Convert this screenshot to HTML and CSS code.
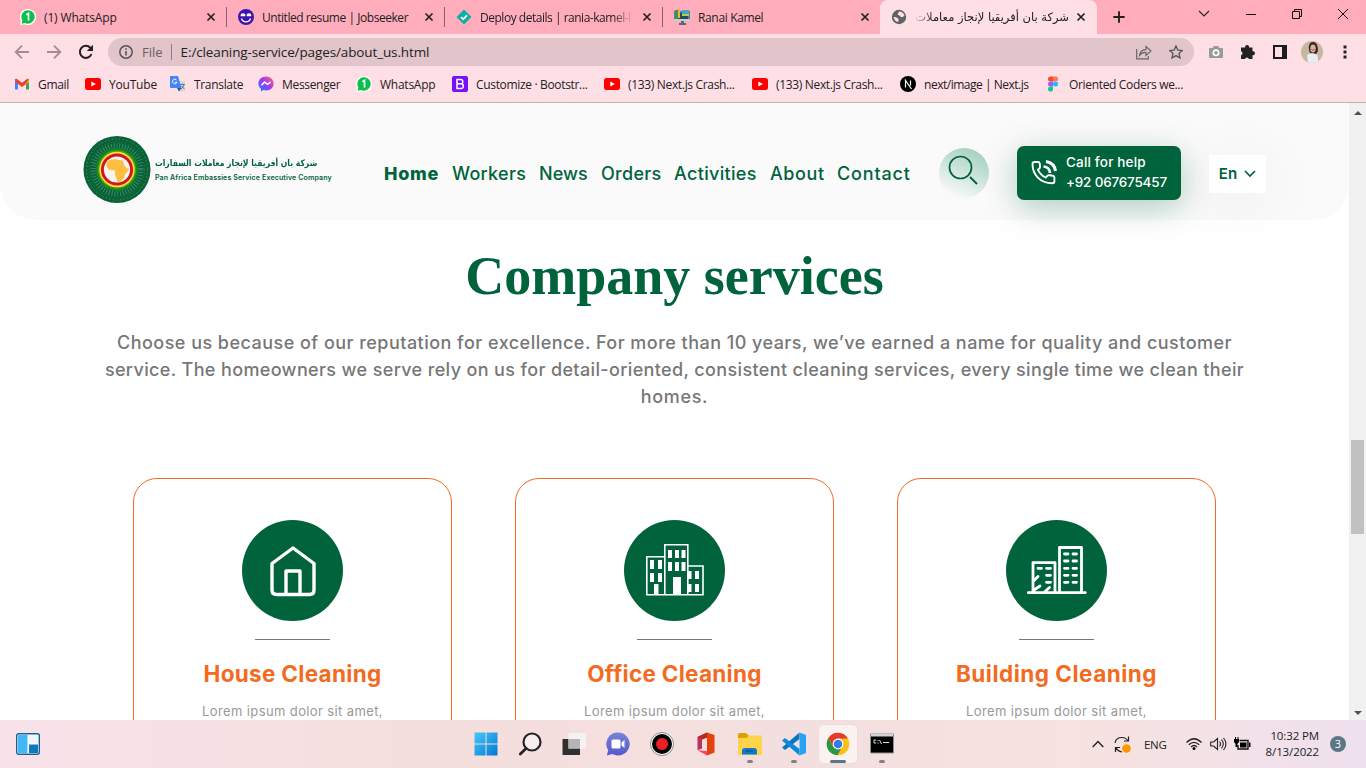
FILE: index.html
```html
<!DOCTYPE html>
<html lang="en">
<head>
<meta charset="utf-8">
<title>Company services</title>
<link rel="stylesheet" href="styles.css">
</head>
<body>
<svg class="defs" width="0" height="0">
  <symbol id="x" viewBox="0 0 10 10"><path d="M1.5 1.5l7 7M8.5 1.5l-7 7" stroke="#222" stroke-width="1.7"/></symbol>
  <symbol id="wa" viewBox="0 0 16 16"><path d="M8 0a8 8 0 1 1-3.5 15.2L0 16l1-4A8 8 0 0 1 8 0z" fill="#fff"/><path d="M8.2 1.2a6.7 6.7 0 1 1-3.2 12.7L1.6 14.8l.8-3.4A6.7 6.7 0 0 1 8.200 1.200z" fill="#0abf4a"/><path d="M6.300 5.800l2.200-1.300v7" fill="none" stroke="#fff" stroke-width="1.700"/></symbol>
  <symbol id="yt" viewBox="0 0 16 12"><rect width="16" height="12" rx="2.500" fill="#f00"/><path d="M6.300 3.400v5.200L10.800 6z" fill="#fff"/></symbol>
</svg>
<div class="window">
  <div class="tabs">
    <div class="tab"><svg class="fav" viewBox="0 0 16 16"><use href="#wa"/></svg><span class="t t1">(1) WhatsApp</span><svg class="close"><use href="#x"/></svg></div>
    <div class="tab"><svg class="fav" viewBox="0 0 16 16"><circle cx="8" cy="8" r="8" fill="#3d14b4"/><path d="M3.300 6.500q0-1.700 1.700-1.700t1.700 1.700zM9.300 6.500q0-1.700 1.700-1.700t1.700 1.700zM3.500 9.500q1 3.300 4.500 3.300t4.500-3.300" fill="none" stroke="#fff" stroke-width="1.300"/></svg><span class="t t2">Untitled resume | Jobseeker</span><svg class="close"><use href="#x"/></svg></div>
    <div class="tab"><svg class="fav" viewBox="0 0 16 16"><path d="M8 .5L15.500 8 8 15.500.5 8z" fill="#0fada2"/><path d="M5 8l2.200 2.200L11 6.300" fill="none" stroke="#fff" stroke-width="1.700"/></svg><span class="t t3 fade">Deploy details | rania-kamel-l</span><svg class="close"><use href="#x"/></svg></div>
    <div class="tab"><svg class="fav" viewBox="0 0 16 16"><path d="M0 2h16v10H0z" fill="#607d8b"/><path d="M2 4h12v6H2z" fill="#254b60"/><path d="M1 1h3v9H1z" fill="#3f8f55"/><path d="M4 0h2v9H4z" fill="#e9b43b"/><path d="M8 1h7v4H8z" fill="#46a6c9"/><path d="M8 5h7v2H8z" fill="#b5cf42"/><path d="M0 10h16v2H0z" fill="#c6d0d4"/><path d="M7 12h3v2h2v2H5v-2h2z" fill="#596a70"/></svg><span class="t t4">Ranai Kamel</span><svg class="close"><use href="#x"/></svg></div>
    <div class="tab active"><svg class="fav" viewBox="0 0 16 16"><circle cx="8" cy="8" r="7.200" fill="#5f6368"/><path d="M2.500 8q3-.5 4.500 1.500T6.500 13Q3.500 12 2.500 8zM8 2.500q4 0 5.500 4Q11 9.500 9.500 7.500T7 6 8 2.500z" fill="#ffdfe6"/></svg><span class="t ar fade-left" dir="rtl">شركة بان أفريقيا لإنجاز معاملات</span><svg class="close"><use href="#x"/></svg></div>
    <svg class="plus" viewBox="0 0 12 12"><path d="M6 .3v11.400M.3 6h11.400" stroke="#222" stroke-width="1.900"/></svg>
    <div class="winctl">
      <svg width="12" height="8" viewBox="0 0 12 8"><path d="M1 1l5 5 5-5" fill="none" stroke="#222" stroke-width="1.100"/></svg>
      <svg width="10" height="10" viewBox="0 0 10 10"><path d="M0 5.500h10" stroke="#111"/></svg>
      <svg width="10" height="10" viewBox="0 0 10 10"><path d="M.5 2.500h7v7h-7zM2.500 2.500v-2h7v7h-2" fill="none" stroke="#111"/></svg>
      <svg width="10" height="10" viewBox="0 0 10 10"><path d="M0 0l10 10M10 0L0 10" stroke="#111"/></svg>
    </div>
  </div>
  <div class="toolbar">
    <svg class="nav-i" viewBox="0 0 16 16"><path d="M15 8H2M8 1.700L1.700 8 8 14.300" fill="none" stroke="#a38d93" stroke-width="1.800"/></svg>
    <svg class="nav-i" viewBox="0 0 16 16"><path d="M1 8h13M8 1.700L14.300 8 8 14.300" fill="none" stroke="#a38d93" stroke-width="1.800"/></svg>
    <svg class="nav-i" viewBox="0 0 16 16"><path d="M13.500 10A6 6 0 1 1 12.300 3.800L14 5.500" fill="none" stroke="#222" stroke-width="2"/><path d="M15 .8v6.200H8.800z" fill="#222"/></svg>
    <div class="omni">
      <svg width="14" height="14" viewBox="0 0 14 14"><circle cx="7" cy="7" r="6.200" fill="none" stroke="#5a5256" stroke-width="1.500"/><path d="M7 6v4.500M7 3.300v1.500" stroke="#5a5256" stroke-width="1.600"/></svg>
      <span class="file">File</span><span class="url">E:/cleaning-service/pages/about_us.html</span>
      <svg class="share" width="16" height="15" viewBox="0 0 16 15"><path d="M.7 4v9.800h11.600V11M3.500 10.500q.5-5.500 6.500-5.800V1.500l5 4.500-5 4.500V7.500q-4-.3-6.500 3z" fill="none" stroke="#666" stroke-width="1.200"/></svg>
      <svg width="14" height="14" viewBox="0 0 14 14"><path d="M7 .9l1.900 4.200 4.400.4L10 8.500l1 4.500-4-2.400L3 13l1-4.500L.7 5.500l4.400-.4z" fill="none" stroke="#555" stroke-width="1.300"/></svg>
    </div>
    <div class="ext">
      <svg width="14" height="14" viewBox="0 0 14 14"><path d="M1 3h2.500L5 1h4l1.500 2H13q1 0 1 1v8q0 1-1 1H1q-1 0-1-1V4q0-1 1-1z" fill="#999"/><circle cx="7" cy="7.800" r="2.700" fill="#999" stroke="#fff" stroke-width="1.700"/></svg>
      <svg class="puzzle" width="16" height="16" viewBox="0 0 16 16"><path d="M1 3.500h4.200a2 2 0 1 1 3.800 0h3.500v3.800a2 2 0 1 1 0 3.900V15H8.900a2 2 0 0 0-3.900 0H1v-3.800a2 2 0 0 0 0-3.900z" fill="#222"/></svg>
      <svg class="panel" width="14" height="14" viewBox="0 0 14 14"><path d="M1 1h12v12H1z" fill="none" stroke="#1d1d1f" stroke-width="2"/><path d="M9 0h5v14H9z" fill="#1d1d1f"/></svg>
      <svg class="avatar" width="22" height="22" viewBox="0 0 22 22"><clipPath id="av"><circle cx="11" cy="11" r="11"/></clipPath><g clip-path="url(#av)"><path d="M0 0h22v22H0z" fill="#c5b8a0"/><path d="M8 9q-1-8 4-8t5 9l-2 3-6-1z" fill="#33262a"/><ellipse cx="12" cy="7.500" rx="2.700" ry="3.900" fill="#e2b09c"/><path d="M10.500 8.500q1.500 1.500 3 0" stroke="#b44a50" fill="none"/><path d="M6 14q5-3.500 10.500 0l1 8H7z" fill="#e9eef5"/></g></svg>
      <svg class="dots" width="4" height="14" viewBox="0 0 4 14"><path d="M.5.500h3v3h-3zM.5 5.500h3v3h-3zM.5 10.500h3v3h-3z" fill="#222"/></svg>
    </div>
  </div>
  <div class="marks">
    <span class="m m1"><svg viewBox="0 0 16 16"><path d="M1 3.500v10h3v-7z" fill="#4285f4"/><path d="M15 3.500v10h-3v-7z" fill="#34a853"/><path d="M12 5l3-2v3l-3 2.500z" fill="#fbbc04"/><path d="M1 3q1.500-1 3 .8l4 3 4-3q1.500-1.800 3-.8L12 8l-4 3-4-3-3-3z" fill="#ea4335"/></svg>Gmail</span>
    <span class="m m2"><svg viewBox="0 0 16 12"><use href="#yt"/></svg>YouTube</span>
    <span class="m m3"><svg viewBox="0 0 16 16"><path d="M6 5h9v10.500H9z" fill="#d5d9dc"/><path d="M0 0h8l3.500 12H1q-1 0-1-1z" fill="#4285f4"/><path d="M7 12h4.500L9 15.500z" fill="#2457b5"/><path d="M6.800 4.300A2.300 2.300 0 1 0 7 6.300H5" stroke="#fff" fill="none"/><path d="M10 8.500h5M12.500 7.500v1M14 8.500q-1 3.500-3 4.500M11.500 10l3 3" stroke="#607d8b" fill="none"/></svg>Translate</span>
    <span class="m m4"><svg viewBox="0 0 16 16"><defs><linearGradient id="ms" x1="0" y1="1" x2="1" y2="0"><stop stop-color="#078cff"/><stop offset=".5" stop-color="#a334fa"/><stop offset="1" stop-color="#ff6a68"/></linearGradient></defs><path d="M8 .5c4.500 0 7.600 3 7.600 7s-3 7-7.600 7c-1 0-1.700-.2-2.500-.4L3 15.400v-2.500C1.300 11.700.4 9.700.4 7.500c0-4 3.100-7 7.600-7z" fill="url(#ms)"/><path d="M3.500 9.300L6.500 6l3 2.300L12.500 6" fill="none" stroke="#fff" stroke-width="1.600"/></svg>Messenger</span>
    <span class="m m5"><svg viewBox="0 0 16 16"><use href="#wa"/></svg>WhatsApp</span>
    <span class="m m6"><svg viewBox="0 0 16 16"><rect width="16" height="16" rx="2" fill="#7610f7"/><path d="M5 3.500h3.500q2.300 0 2.300 2.200T8.500 7.800H5h3.800q2.500 0 2.500 2.400T8.800 12.600H5z" fill="none" stroke="#fff" stroke-width="1.500"/></svg>Customize · Bootstr...</span>
    <span class="m m7"><svg viewBox="0 0 16 12"><use href="#yt"/></svg>(133) Next.js Crash...</span>
    <span class="m m8"><svg viewBox="0 0 16 12"><use href="#yt"/></svg>(133) Next.js Crash...</span>
    <span class="m m9"><svg viewBox="0 0 16 16"><circle cx="8" cy="8" r="8"/><path d="M5.500 11.500v-7l6 8.500M10.500 4.500v5" fill="none" stroke="#fff" stroke-width="1.200"/></svg>next/image | Next.js</span>
    <span class="m m10"><svg viewBox="0 0 16 16"><path d="M8 .5H5.500a2.500 2.500 0 0 0 0 5H8z" fill="#f24e1e"/><path d="M8 .5h2.500a2.500 2.500 0 0 1 0 5H8z" fill="#ff7262"/><path d="M8 5.500H5.500a2.500 2.500 0 0 0 0 5H8z" fill="#a259ff"/><circle cx="10.500" cy="8" r="2.500" fill="#1abcfe"/><path d="M8 10.500H5.500A2.500 2.500 0 1 0 8 13z" fill="#0acf83"/></svg>Oriented Coders we...</span>
  </div>
  <div class="view">
    <div class="page">
      <header class="header">
        <svg class="seal" viewBox="0 0 68 68"><circle cx="34" cy="34" r="34" fill="#05633c"/><circle cx="34" cy="34" r="31" fill="none" stroke="#8f8526" stroke-width="1" stroke-dasharray="1.200 2.500"/><circle cx="34" cy="34" r="28" fill="none" stroke="#5f772c" stroke-width="1" stroke-dasharray="1 2.500"/><circle cx="34" cy="34" r="24" fill="none" stroke="#4a8f6c" stroke-width="5.500" stroke-dasharray=".8 2"/><circle cx="34" cy="34" r="21.500" fill="#17851d"/><circle cx="34" cy="34" r="19.500" fill="#4f9e1b"/><circle cx="34" cy="34" r="18" fill="#f4e13a"/><circle cx="34" cy="34" r="16.300" fill="#d41622"/><circle cx="34" cy="34" r="13.300" fill="#f7f4ee"/><path d="M23.500 27q1.500-3 5-3 5-1 8 .5h3l2.500 6 2 2.500h2.500q-.5 3-4.500 6l-.5 3-2 2-2 3q-3 .5-3.500-2l-2-6q.5-3-1-4.500-5 1-7-2.500-1-3-.5-5z" fill="#fdbf3f"/></svg>
        <div class="brand"><span class="brand-ar" dir="rtl">شركة بان أفريقيا لإنجاز معاملات السفارات</span><span class="brand-en">Pan Africa Embassies Service Executive Company</span></div>
        <nav class="menu"><a class="w1">Home</a><a class="w2">Workers</a><a class="w3">News</a><a class="w4">Orders</a><a class="w5">Activities</a><a class="w6">About</a><a class="w7">Contact</a></nav>
        <div class="search"><svg width="50" height="50" viewBox="0 0 50 50"><circle cx="21.500" cy="19.500" r="11" fill="none" stroke="#00633c" stroke-width="1.700"/><path d="M31 29l7 7" stroke="#00633c" stroke-width="1.900"/></svg></div>
        <div class="call"><svg width="26" height="26" viewBox="0 0 26 26"><path d="M3.500 2h3.600q1.400 0 1.600 1.500l.4 3q.1 1.200-.8 2L7 9.800q2.500 5.200 7.700 7.700l1.600-1.700q.8-.8 2-.6l3.600.6q1.500.3 1.500 1.800v3.600q0 2-2 2Q12 23 6.800 17.600 1.500 12 1.500 4.300 1.500 2 3.500 2z" fill="none" stroke="#fff" stroke-width="1.900"/><path d="M12.500 6.500q6 .5 6.500 6.500" fill="none" stroke="#fff" stroke-width="2.600"/><path d="M15 1.500q8.500 1.500 9.500 9.500" fill="none" stroke="#fff" stroke-width="3"/></svg><div><span class="c1">Call for help</span><span class="c2">+92 067675457</span></div></div>
        <div class="lang"><span>En</span><svg width="12" height="8" viewBox="0 0 12 8"><path d="M1 1l5 5 5-5" fill="none" stroke="#00633c" stroke-width="1.700"/></svg></div>
      </header>
      <h1 class="title">Company services</h1>
      <p class="intro"><span class="l1">Choose us because of our reputation for excellence. For more than 10 years, we’ve earned a name for quality and customer</span><span class="l2">service. The homeowners we serve rely on us for detail-oriented, consistent cleaning services, every single time we clean their</span><span class="l3">homes.</span></p>
      <div class="cards">
        <section class="card"><div class="disc"><svg viewBox="0 0 101 101" fill="none" stroke="#fff" stroke-width="3.400" stroke-linejoin="round"><path d="M51 28L30 43.500V70q0 4.500 4.500 4.500h33q4.500 0 4.500-4.500V43.500z"/><path d="M44 74V51h14v23"/></svg></div><hr><h2 class="h-a">House Cleaning</h2><p>Lorem ipsum dolor sit amet,</p></section>
        <section class="card"><div class="disc"><svg viewBox="0 0 101 101"><path d="M22.800 36.800h18v38h-18zM40.800 24.800h23v50h-23zM63.800 46h15.200v28.800H63.800z" fill="none" stroke="#fff" stroke-width="1.600"/><path d="M26 40h4v9h-4zM34 40h4v9h-4zM26 53h4v9h-4zM34 53h4v9h-4zM30 64h4.500v11H30zM44 30h4v8h-4zM51 30h4v8h-4zM57.500 30h4v8h-4zM44 42h4v9h-4zM51 42h4v9h-4zM57.500 42h4v9h-4zM49 57h8v18h-8zM64 51h3.500v8H64zM71 51h4v8h-4zM64 64h3.500v8H64zM71 64h4v8h-4z" fill="#fff"/></svg></div><hr><h2 class="h-b">Office Cleaning</h2><p>Lorem ipsum dolor sit amet,</p></section>
        <section class="card"><div class="disc"><svg viewBox="0 0 101 101" fill="none" stroke="#fff" stroke-width="2.800" stroke-linecap="round" stroke-linejoin="round"><path d="M22.300 72.700h57M27 72V42.700h22V72M53.500 72V27.500h22V72M32 48.300h3.500M40.500 48.300h4M40.500 55.300h4M40.500 62.300h4M58.500 34h3.500M67 34h3.500M58.500 41h3.500M67 41h3.500M58.500 48.300h3.500M67 48.300h3.500M58.500 55.300h3.500M67 55.300h3.500M58.500 62.300h3.500M67 62.300h3.500M27.500 61l4.500-4.500M28 70l6-4M38.500 72l5-4.500"/></svg></div><hr><h2 class="h-c">Building Cleaning</h2><p>Lorem ipsum dolor sit amet,</p></section>
      </div>
    </div>
    <div class="scroll"><i class="up"></i><b></b><i class="down"></i></div>
  </div>
  <footer class="task">
    <svg class="widgets" width="24" height="22" viewBox="0 0 24 22"><rect x=".7" y=".7" width="22.600" height="20.600" rx="2" fill="#fff" stroke="#156098" stroke-width="1.400"/><path d="M2 2h9.500v18H2z" fill="#43b8f4"/><path d="M13 2h9v8h-9z" fill="#eef8fc"/><path d="M13 11.500h9V20h-9z" fill="#1378b9"/></svg>
    <div class="apps">
      <span><svg viewBox="0 0 24 24"><defs><linearGradient id="wi" x1="0" y1="0" x2="1" y2="1"><stop stop-color="#49c8fb"/><stop offset="1" stop-color="#0078d4"/></linearGradient></defs><path d="M.5.5h11v11H.500zM12.500.5h11v11h-11zM.5 12.500h11v11H.500zM12.500 12.500h11v11h-11z" fill="url(#wi)"/></svg></span>
      <span><svg viewBox="0 0 24 24"><circle cx="14" cy="10" r="8.500" fill="#f8eeee" stroke="#252525" stroke-width="2.200"/><path d="M8 16.500L2.300 22" stroke="#252525" stroke-width="2.800" stroke-linecap="round"/></svg></span>
      <span><svg viewBox="0 0 24 24"><path d="M.5 7H18v16H.500z" fill="#303030"/><path d="M6.500 1H24v15.500H6.500z" fill="#f4f4f4" opacity=".9"/><path d="M6.500 7H18v9.500H6.500z" fill="#b5b5b5"/></svg></span>
      <span><svg viewBox="0 0 24 24"><defs><linearGradient id="ch" x1="0" y1="0" x2="0" y2="1"><stop stop-color="#7b83d7"/><stop offset="1" stop-color="#5558cb"/></linearGradient></defs><path d="M12 .5A11.500 11.500 0 1 1 6.500 22L.800 23.500l1.400-5.200A11.500 11.500 0 0 1 12 .5z" fill="url(#ch)"/><rect x="5.500" y="7.500" width="9" height="9" rx="1.500" fill="#fff"/><path d="M15.500 10.500l3-2.500v8l-3-2.500z" fill="#fff"/></svg></span>
      <span><svg viewBox="0 0 24 24"><circle cx="12" cy="12" r="11.500" fill="#fff" stroke="#888"/><circle cx="12" cy="12" r="10" fill="#000"/><circle cx="12" cy="12" r="6" fill="#e92127"/></svg></span>
      <span><svg viewBox="0 0 24 24"><path d="M3.500 5L13 .5v5L8 7.500v9l-4.500 1.800z" fill="#b93165"/><path d="M13 .5l7.500 2.500v17.500L13 23.500z" fill="#e34308"/><path d="M3.500 5L13 .5v5L8 7.500z" fill="#b42b17"/><path d="M3.500 18.300l9.500.7v4.500z" fill="#ed4770"/></svg></span>
      <span><svg viewBox="0 0 24 24"><path d="M0 3.500h24V23H0z" fill="#ffd34a"/><path d="M0 5.500V3q0-2 2-2h6l2.500 2.500L8.500 6H0z" fill="#dca000"/><path d="M4 22.500V19q0-3 3-3h9q3 0 3 3v3.500z" fill="#1178cc"/><path d="M8 19h7" stroke="#0b548f" stroke-width="1.500"/></svg><em></em></span>
      <span><svg viewBox="0 0 24 24"><path d="M17.500.5v6.500L3 18 0 15.500z" fill="#0876be"/><path d="M17.500 23.500V17L3 6 0 8.500z" fill="#0b8bdc"/><path d="M17.500.5L24 3v18l-6.500 2.500z" fill="#27a3f3"/></svg><em></em></span>
      <span class="on"><svg viewBox="0 0 24 24"><circle cx="12" cy="12" r="11.300" fill="#fbc116"/><path d="M2.200 6.300A11.300 11.300 0 0 1 21.800 6.500H12L7 14.500z" fill="#e33b2e"/><path d="M2.200 6.300L7 14.500 15 17l-3.500 6.300A11.300 11.300 0 0 1 2.200 6.300z" fill="#279847"/><circle cx="12" cy="12" r="5.400" fill="#fff"/><circle cx="12" cy="12" r="4.300" fill="#337bea"/></svg><em class="wide"></em></span>
      <span><svg viewBox="0 0 24 24"><path d="M.5 2h23v19H.500z" fill="#000" stroke="#8e9295"/><path d="M1 2h22v2.500H1z" fill="#d2d5d7"/><path d="M6 8H4v3h2M8 8v1M8 10.500v1M9.500 8l2 4M13 10.500h6" fill="none" stroke="#ddd"/></svg><em></em></span>
    </div>
    <div class="tray">
      <svg width="12" height="8" viewBox="0 0 12 8"><path d="M.7 7L6 1.500 11.300 7" fill="none" stroke="#222" stroke-width="1.400"/></svg>
      <svg class="sync" width="17" height="17" viewBox="0 0 17 17"><path d="M1 7q1-5.500 7-5.500 4 0 6 3.500M14.500.5V5H10M1.500 16v-4.500H6M2 12q2 3.500 6 4" fill="none" stroke="#222" stroke-width="1.200"/><circle cx="12.500" cy="12.500" r="4.300" fill="#ff9800"/></svg>
      <span class="eng">ENG</span>
      <svg class="wifi" width="16" height="12" viewBox="0 0 16 12"><path d="M.5 4.500q7.500-7.500 15 0M2.800 6.800q5.200-5 10.400 0M5 9q3-3 6 0" fill="none" stroke="#222" stroke-width="1.200"/><circle cx="8" cy="10.500" r="1.500"/></svg>
      <svg class="vol" width="17" height="14" viewBox="0 0 17 14"><path d="M.7 5h3L7.500 1.500v11L3.700 9h-3zM9.500 4.500q2 2.500 0 5M11.500 2.500q3.500 4.500 0 9M13.500 1q5 6 0 12" fill="none" stroke="#222" stroke-width="1.100"/></svg>
      <svg class="bat" width="17" height="14" viewBox="0 0 17 14"><path d="M5.500 3.500H14v8.500H4V8" fill="none" stroke="#111" stroke-width="1.400"/><path d="M6 5.500h6.500v5H6zM15 5.500h1.500V10H15zM0 2h5v3L3.500 7v3h-2V7L0 5zM1 0h1v2H1zM3.500 0h1v2h-1z"/></svg>
      <div class="clock"><span class="k1">10:32 PM</span><span class="k2">8/13/2022</span></div>
      <span class="badge">3</span>
    </div>
  </footer>
</div>
</body>
</html>
```
FILE: styles.css
```css
* { box-sizing: border-box; }
body { margin: 0; font-family: "Open Sans", "Noto Sans", sans-serif; color: #222; }
svg { display: block; flex: none; }
.defs { position: absolute; }
.window { width: 1366px; height: 768px; display: flex; flex-direction: column; overflow: hidden; background: #fff; }

.tabs { height: 34px; background: #ffadbc; display: flex; padding-left: 8px; flex: none; }
.tab { width: 218px; height: 34px; display: flex; align-items: center; padding: 0 10px 0 12px; font-size: 12px; white-space: nowrap; }
.tab:nth-child(2), .tab:nth-child(3), .tab:nth-child(4) { background: linear-gradient(#80656b, #80656b) left 7px / 1px 20px no-repeat; }
.tab.active { width: 217px; background: #ffdfe6; border-radius: 8px 8px 0 0; padding-right: 11px; }
.tab:nth-child(4) { width: 217px; margin-right: 0; }
.tab:nth-child(4) { width: 218px; }
.fav { width: 16px; height: 16px; margin-right: 8px; }
.active .fav { margin-left: -1px; }
.close { width: 10px; height: 10px; margin-left: auto; }
.t1 { letter-spacing: -.15px; }
.t2 { letter-spacing: -.45px; }
.t3 { letter-spacing: -.48px; }
.t4 { letter-spacing: -.35px; }
.fade { mask-image: linear-gradient(90deg, #000 88%, rgba(0,0,0,.1)); }
.fade-left { mask-image: linear-gradient(270deg, #000 88%, rgba(0,0,0,.1)); }
.ar { font: 11.500px/16px "DejaVu Sans", sans-serif; margin-left: auto; }
.active .close { margin-left: 7px; }
.plus { width: 12px; height: 12px; margin: 11px 0 0 16px; }
.winctl { display: flex; align-items: center; gap: 36px; margin: 0 18px 6px auto; }

.toolbar { height: 36px; background: #ffdfe6; display: flex; align-items: center; flex: none; padding-left: 14px; }
.nav-i { width: 16px; height: 16px; margin-right: 16px; }
.omni { margin-left: -2px; width: 1086px; height: 28px; border-radius: 14px; background: #e1c5ca; display: flex; align-items: center; padding: 0 11px; font-size: 14px; }
.file { color: #6a6064; font-size: 13px; margin-left: 9px; padding-right: 8px; border-right: 1px solid #8e7b80; line-height: 16px; }
.url { margin-left: 9px; letter-spacing: -.12px; font-size: 13.500px; }
.share { margin: 0 17px 0 auto; }
.ext { display: flex; align-items: center; margin-left: 15px; }
.puzzle { margin-left: 17px; }
.panel { margin-left: 17px; }
.avatar { margin-left: 14px; }
.dots { margin-left: 20px; }

.marks { height: 33px; background: #ffdfe6; border-bottom: 1px solid #c9aeb4; display: flex; flex: none; padding: 0 0 4px 14px; font-size: 12px; }
.m { display: flex; align-items: center; white-space: nowrap; letter-spacing: -.25px; }
.m svg { width: 16px; height: 16px; margin-right: 8px; }
.m1 { width: 71px; } .m2 { width: 85px; } .m3 { width: 88px; } .m4 { width: 98px; } .m5 { width: 96px; }
.m6 { width: 152px; } .m7 { width: 148px; } .m8 { width: 148px; } .m9 { width: 145px; }
.m1, .m3, .m4 { letter-spacing: -.32px; }
.m2 { letter-spacing: -.2px; }
.m6, .m7, .m8, .m10 { letter-spacing: -.33px; }
.m9 { letter-spacing: -.48px; }

.view { height: 617px; flex: none; display: flex; overflow: hidden; }
.page { width: 1349px; overflow: hidden; font-family: Inter, "Open Sans", sans-serif; }
.header { height: 117px; background: #fafafa; border-radius: 0 0 36px 36px; display: flex; align-items: center; padding: 0 83px; color: #00633c; }
.seal { width: 68px; height: 67px; margin-top: 16px; }
.brand { width: 233px; margin: 17px 0 0 4px; display: flex; flex-direction: column; align-items: flex-start; white-space: nowrap; }
.brand-ar { font: bold 9px/15px "DejaVu Sans", sans-serif; transform: scaleX(.853); transform-origin: left; }
.brand-en { font-size: 7px; font-weight: 600; line-height: 14px; letter-spacing: .15px; }
.menu { display: flex; gap: 13px; margin: 24px 0 0 -4px; font-size: 18px; font-weight: 500; white-space: nowrap; }
.menu a { display: block; }
.w1 { width: 55px; font-weight: 800; letter-spacing: .7px; }
.w2 { width: 74px; letter-spacing: .28px; }
.w3 { width: 49px; letter-spacing: .1px; }
.w4 { width: 60px; letter-spacing: .3px; }
.w5 { width: 83px; letter-spacing: .33px; }
.w6 { width: 54px; letter-spacing: .6px; }
.w7 { width: 74px; letter-spacing: .85px; }
.search { width: 50px; height: 50px; border-radius: 50%; margin: 22px 28px 0 28px; background: linear-gradient(205deg, #a9d3c3 15%, #fafafa 90%); }
.call { width: 164px; height: 54px; margin-top: 23px; background: #00633c; border-radius: 7px; box-shadow: 0 8px 32px rgba(0,99,60,.3); color: #fff; display: flex; align-items: center; gap: 9px; padding-left: 14px; flex: none; white-space: nowrap; }
.call span { display: block; line-height: 20px; font-size: 13.500px; font-weight: 500; }
.call div { padding-bottom: 2px; }
.c1 { letter-spacing: .18px; }
.c2 { letter-spacing: -.2px; }
.lang { width: 57px; height: 38px; margin: 24px 0 0 28px; background: #fff; box-shadow: 0 10px 60px rgba(0,0,0,.07); display: flex; align-items: center; justify-content: center; gap: 7px; font-size: 15px; font-weight: 600; flex: none; }
.title { font: bold 54px/62px "Liberation Serif", serif; color: #00633c; text-align: center; margin: 25px 0 0; }
.intro { margin: 22px 0 0; text-align: center; color: #777; font-size: 18px; line-height: 27px; font-weight: 500; white-space: nowrap; }
.intro span { display: block; }
.l1 { letter-spacing: .468px; }
.l2 { letter-spacing: .362px; }
.l3 { letter-spacing: .65px; }
.cards { margin: 68px 133px 0; display: flex; justify-content: space-between; }
.card { width: 319px; height: 360px; border: 1px solid #f26b21; border-radius: 24px; padding-top: 41px; text-align: center; }
.disc { width: 101px; height: 101px; margin: 0 auto; background: #00633c; border-radius: 50%; }
.card hr { width: 75px; height: 1px; border: 0; background: #777; margin: 18px auto 19px; }
.card h2 { margin: 0; color: #f26b21; font-size: 22.500px; line-height: 30px; font-weight: 700; white-space: nowrap; }
.h-a { letter-spacing: .3px; }
.h-b { letter-spacing: .28px; }
.h-c { letter-spacing: .5px; }
.card p { margin: 12px 0 0; font-size: 13px; line-height: 20px; color: #999; letter-spacing: .38px; }
.scroll { width: 17px; background: #f1f1f1; display: flex; flex-direction: column; align-items: center; }
.scroll b { width: 13px; height: 94px; background: #c1c1c1; margin: 325px 0 auto; }
.scroll i { border: 4px solid transparent; width: 0; height: 0; }
.scroll .up { border-bottom-color: #505050; margin-top: 4px; }
.scroll .down { border-top-color: #505050; margin-bottom: 1px; }

.task { height: 48px; flex: none; background: linear-gradient(90deg, #f7e2ea, #f5dfdd 30%, #f4dfe0 60%, #f7e2df 78%, #efe0ee); display: flex; align-items: center; }
.widgets { margin-left: 16px; }
.apps { display: flex; gap: 6px; margin-left: 426.500px; }
.apps span { position: relative; width: 38px; height: 38px; display: flex; align-items: center; justify-content: center; border-radius: 4px; }
.apps svg { width: 24px; height: 24px; }
.apps .on { background: #fbf1f1; box-shadow: 0 0 1px #bba; }
.apps em { position: absolute; bottom: 0; left: 16px; width: 6px; height: 3px; border-radius: 2px; background: #8b8080; }
.apps .wide { width: 16px; left: 11px; background: #5b7686; }
.tray { display: flex; align-items: center; margin-left: auto; padding-right: 20px; font-size: 12px; }
.sync { margin-left: 10px; }
.eng { margin-left: 13px; width: 23px; font-size: 11.500px; letter-spacing: -.3px; }
.wifi { margin-left: 19px; }
.vol { margin-left: 8px; }
.bat { margin-left: 7px; }
.clock { width: 68px; text-align: right; white-space: nowrap; }
.clock span { display: block; line-height: 16px; font-size: 11.500px; letter-spacing: -.12px; }
.badge { width: 16px; height: 16px; border-radius: 50%; background: #5b7686; color: #fff; font-size: 11px; line-height: 16px; text-align: center; margin-left: 11px; }
```
